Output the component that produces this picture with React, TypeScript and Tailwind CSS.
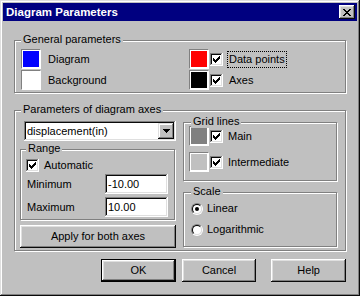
import React from "react";

function Check({ checked = true }: { checked?: boolean }) {
  return (
    <div className="w-[13px] h-[13px] shrink-0 bg-white shadow-[inset_-1px_-1px_#fff,inset_1px_1px_#808080,inset_-2px_-2px_#dfdfdf,inset_2px_2px_#0a0a0a] flex items-center justify-center">
      {checked && (
        <svg width="7" height="7" viewBox="0 0 7 7" shapeRendering="crispEdges">
          <path
            fill="#000"
            d="M6 0h1v1h-1z M5 1h2v1h-2z M0 2h1v1h-1z M4 2h3v1h-3z M0 3h2v1h-2z M3 3h3v1h-3z M0 4h5v1h-5z M1 5h3v1h-3z M2 6h1v1h-1z"
          />
        </svg>
      )}
    </div>
  );
}

function Swatch({ color }: { color: string }) {
  return (
    <div
      className="w-[20px] h-[20px] shrink-0 border border-t-[#808080] border-l-[#808080] border-b-white border-r-white shadow-[inset_0_0_0_1px_#fff]"
      style={{ backgroundColor: color }}
    />
  );
}

function Radio({ on }: { on?: boolean }) {
  return (
    <div className="w-[12px] h-[12px] shrink-0 rounded-full border border-t-[#808080] border-l-[#808080] border-b-white border-r-white flex items-center justify-center">
      <div className="w-[10px] h-[10px] rounded-full bg-white border border-t-black border-l-black border-b-[#dfdfdf] border-r-[#dfdfdf] flex items-center justify-center">
        {on && <div className="w-[4px] h-[4px] rounded-full bg-black" />}
      </div>
    </div>
  );
}

function Button({ children, className = "" }: { children: React.ReactNode; className?: string }) {
  return (
    <div
      className={
        "h-[23px] bg-[#c0c0c0] shadow-[inset_-1px_-1px_#0a0a0a,inset_1px_1px_#fff,inset_-2px_-2px_#808080,inset_2px_2px_#dfdfdf] flex items-center justify-center " +
        className
      }
    >
      {children}
    </div>
  );
}

export default function App() {
  return (
    <div className="w-[360px] h-[296px] bg-[#c0c0c0] p-[3px] shadow-[inset_-1px_-1px_#0a0a0a,inset_1px_1px_#dfdfdf,inset_-2px_-2px_#808080,inset_2px_2px_#fff] text-[11px] leading-[13px] text-black font-['Liberation_Sans',Arial,sans-serif]">
      {/* Title bar */}
      <div className="h-[18px] bg-[#000080] flex items-center justify-between pl-[3px] pr-[2px]">
        <span className="text-white font-bold text-[11.5px]">Diagram Parameters</span>
        <div className="w-[16px] h-[14px] bg-[#c0c0c0] shadow-[inset_-1px_-1px_#0a0a0a,inset_1px_1px_#fff,inset_-2px_-2px_#808080,inset_2px_2px_#dfdfdf] flex items-center justify-center">
          <svg width="8" height="7" viewBox="0 0 8 7" shapeRendering="crispEdges">
            <path
              fill="#000"
              d="M0 0h2v1h-2z M6 0h2v1h-2z M1 1h2v1h-2z M5 1h2v1h-2z M2 2h4v1h-4z M3 3h2v1h-2z M2 4h4v1h-4z M1 5h2v1h-2z M5 5h2v1h-2z M0 6h2v1h-2z M6 6h2v1h-2z"
            />
          </svg>
        </div>
      </div>

      <div className="px-[11px]">
        {/* General parameters */}
        <div className="relative mt-[19px] w-[332px] h-[53px] border border-[#808080] shadow-[1px_1px_0_#fff,inset_1px_1px_0_#fff] pl-[6px] pt-[8px] flex">
          <span className="absolute -top-[8px] left-[6px] bg-[#c0c0c0] px-[2px]">General parameters</span>
          <div className="w-[168px] flex flex-col gap-[1px]">
            <div className="flex items-center h-[20px]">
              <Swatch color="#0000ff" />
              <span className="ml-[7px]">Diagram</span>
            </div>
            <div className="flex items-center h-[20px]">
              <Swatch color="#ffffff" />
              <span className="ml-[7px]">Background</span>
            </div>
          </div>
          <div className="flex flex-col gap-[1px]">
            <div className="flex items-center h-[20px]">
              <Swatch color="#ff0000" />
              <div className="ml-[1px]">
                <Check />
              </div>
              <span className="ml-[4px] border border-dotted border-black px-[1px] py-[1px]">Data points</span>
            </div>
            <div className="flex items-center h-[20px]">
              <Swatch color="#000000" />
              <div className="ml-[1px]">
                <Check />
              </div>
              <span className="ml-[4px] border border-transparent px-[1px]">Axes</span>
            </div>
          </div>
        </div>

        {/* Parameters of diagram axes */}
        <div className="relative mt-[17px] w-[332px] h-[141px] border border-[#808080] shadow-[1px_1px_0_#fff,inset_1px_1px_0_#fff] pl-[5px] flex items-start">
          <span className="absolute -top-[8px] left-[6px] bg-[#c0c0c0] px-[2px]">Parameters of diagram axes</span>
          <div className="w-[156px] pt-[10px] flex flex-col">
            <div className="ml-[4px] w-[152px] h-[20px] bg-white shadow-[inset_-1px_-1px_#fff,inset_1px_1px_#808080,inset_-2px_-2px_#dfdfdf,inset_2px_2px_#0a0a0a] flex items-center p-[2px]">
              <span className="flex-1 pl-[1px]">displacement(in)</span>
              <div className="w-[16px] h-[16px] bg-[#c0c0c0] shadow-[inset_-1px_-1px_#0a0a0a,inset_1px_1px_#dfdfdf,inset_-2px_-2px_#808080,inset_2px_2px_#fff] flex items-center justify-center">
                <svg width="7" height="4" viewBox="0 0 7 4" shapeRendering="crispEdges">
                  <path fill="#000" d="M0 0h7v1h-7z M1 1h5v1h-5z M2 2h3v1h-3z M3 3h1v1h-1z" />
                </svg>
              </div>
            </div>

            <div className="relative mt-[8px] w-[155px] h-[71px] border border-[#808080] shadow-[1px_1px_0_#fff,inset_1px_1px_0_#fff] pl-[5px] pt-[9px] flex flex-col">
              <span className="absolute -top-[8px] left-[5px] bg-[#c0c0c0] px-[2px]">Range</span>
              <div className="flex items-center h-[13px]">
                <Check />
                <span className="ml-[5px]">Automatic</span>
              </div>
              <div className="flex items-center mt-[2px] h-[20px]">
                <span className="w-[79px] pl-[1px]">Minimum</span>
                <div className="w-[63px] h-[20px] bg-white shadow-[inset_-1px_-1px_#fff,inset_1px_1px_#808080,inset_-2px_-2px_#dfdfdf,inset_2px_2px_#0a0a0a] flex items-center pl-[3px]">
                  -10.00
                </div>
              </div>
              <div className="flex items-center mt-[3px] h-[20px]">
                <span className="w-[79px] pl-[1px]">Maximum</span>
                <div className="w-[63px] h-[20px] bg-white shadow-[inset_-1px_-1px_#fff,inset_1px_1px_#808080,inset_-2px_-2px_#dfdfdf,inset_2px_2px_#0a0a0a] flex items-center pl-[3px]">
                  10.00
                </div>
              </div>
            </div>

            <Button className="mt-[5px] w-[156px]">Apply for both axes</Button>
          </div>

          <div className="ml-[7px] pt-[11px] flex flex-col">
            <div className="relative w-[154px] h-[59px] border border-[#808080] shadow-[1px_1px_0_#fff,inset_1px_1px_0_#fff] pl-[5px] pt-[3px] flex flex-col">
              <span className="absolute -top-[8px] left-[7px] bg-[#c0c0c0] px-[2px]">Grid lines</span>
              <div className="flex items-center h-[20px]">
                <Swatch color="#808080" />
                <div className="ml-[1px]">
                  <Check />
                </div>
                <span className="ml-[5px]">Main</span>
              </div>
              <div className="flex items-center h-[20px] mt-[6px]">
                <Swatch color="#c0c0c0" />
                <div className="ml-[1px]">
                  <Check />
                </div>
                <span className="ml-[5px]">Intermediate</span>
              </div>
            </div>

            <div className="relative mt-[11px] w-[154px] h-[55px] border border-[#808080] shadow-[1px_1px_0_#fff,inset_1px_1px_0_#fff] pl-[7px] pt-[5px] flex flex-col">
              <span className="absolute -top-[8px] left-[7px] bg-[#c0c0c0] px-[2px]">Scale</span>
              <div className="flex items-center h-[21px]">
                <Radio on />
                <span className="ml-[4px]">Linear</span>
              </div>
              <div className="flex items-center h-[21px]">
                <Radio />
                <span className="ml-[4px]">Logarithmic</span>
              </div>
            </div>
          </div>
        </div>

        {/* Bottom buttons */}
        <div className="mt-[8px] flex">
          <div className="ml-[87px] w-[75px] h-[23px] border border-black">
            <Button className="w-full h-full">OK</Button>
          </div>
          <Button className="ml-[6px] w-[75px]">Cancel</Button>
          <Button className="ml-[15px] w-[75px]">Help</Button>
        </div>
      </div>
    </div>
  );
}
